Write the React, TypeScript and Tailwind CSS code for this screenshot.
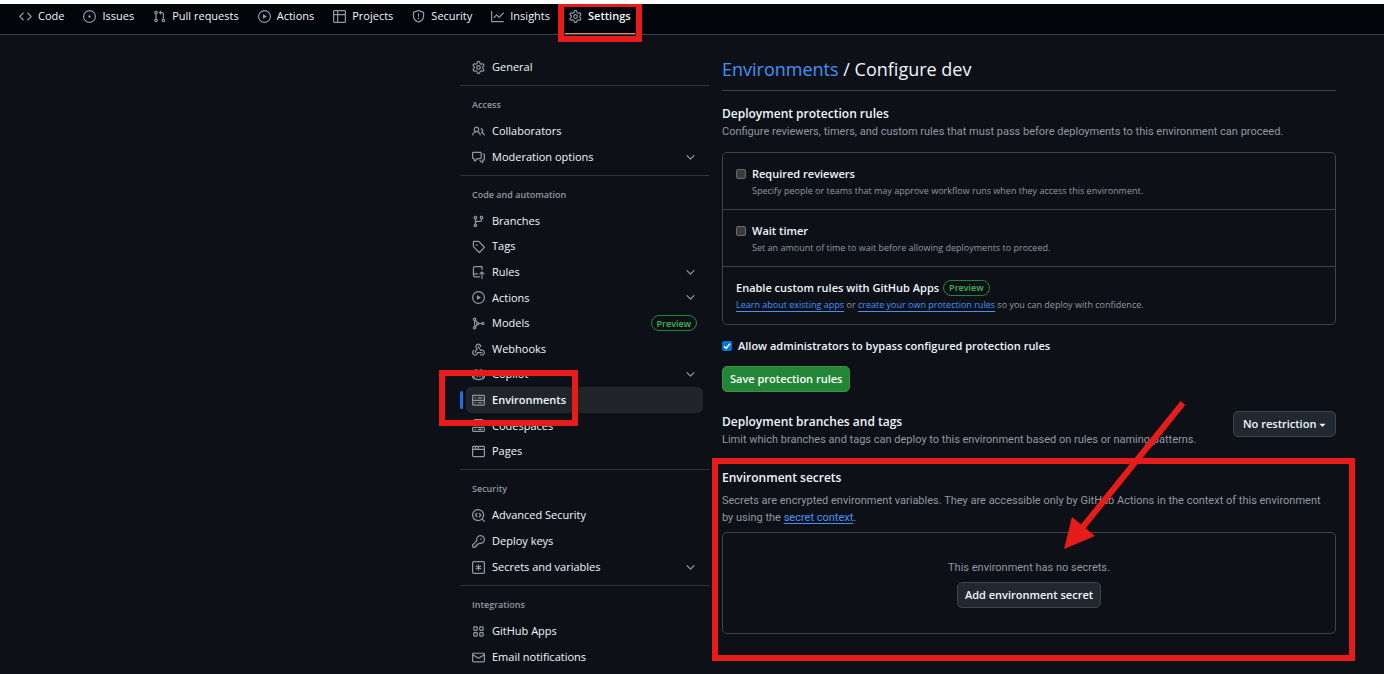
import { useState } from "react";
import type { ReactNode } from "react";

const icons: Record<string, ReactNode> = {
  code: (
    <path d="m11.28 3.22 4.25 4.25a.75.75 0 0 1 0 1.06l-4.25 4.25a.749.749 0 0 1-1.275-.326.749.749 0 0 1 .215-.734L13.94 8l-3.72-3.72a.749.749 0 0 1 .326-1.275.749.749 0 0 1 .734.215Zm-6.56 0a.751.751 0 0 1 1.042.018.751.751 0 0 1 .018 1.042L2.06 8l3.72 3.72a.749.749 0 0 1-.326 1.275.749.749 0 0 1-.734-.215L.47 8.53a.75.75 0 0 1 0-1.06Z" />
  ),
  issue: (
    <path d="M8 9.5a1.5 1.5 0 1 0 0-3 1.5 1.5 0 0 0 0 3ZM8 0a8 8 0 1 1 0 16A8 8 0 0 1 8 0ZM1.5 8a6.5 6.5 0 1 0 13 0 6.5 6.5 0 0 0-13 0Z" />
  ),
  pull: (
    <path d="M1.5 3.25a2.25 2.25 0 1 1 3 2.122v5.256a2.251 2.251 0 1 1-1.5 0V5.372A2.25 2.25 0 0 1 1.5 3.25Zm5.677-.177L9.573.677A.25.25 0 0 1 10 .854V2.5h1A2.5 2.5 0 0 1 13.5 5v5.628a2.251 2.251 0 1 1-1.5 0V5a1 1 0 0 0-1-1h-1v1.646a.25.25 0 0 1-.427.177L7.177 3.427a.25.25 0 0 1 0-.354ZM3.75 2.5a.75.75 0 1 0 0 1.5.75.75 0 0 0 0-1.5Zm0 9.5a.75.75 0 1 0 0 1.5.75.75 0 0 0 0-1.5Zm8.25.75a.75.75 0 1 0 1.5 0 .75.75 0 0 0-1.5 0Z" />
  ),
  play: (
    <path d="M8 0a8 8 0 1 1 0 16A8 8 0 0 1 8 0ZM1.5 8a6.5 6.5 0 1 0 13 0 6.5 6.5 0 0 0-13 0Zm4.879-2.773 4.264 2.559a.25.25 0 0 1 0 .428l-4.264 2.559A.25.25 0 0 1 6 10.559V5.442a.25.25 0 0 1 .379-.215Z" />
  ),
  table: (
    <path d="M0 1.75C0 .784.784 0 1.75 0h12.5C15.216 0 16 .784 16 1.75v12.5A1.75 1.75 0 0 1 14.25 16H1.75A1.75 1.75 0 0 1 0 14.25ZM6.5 6.5v8h7.75a.25.25 0 0 0 .25-.25V6.5Zm8-1.5V1.75a.25.25 0 0 0-.25-.25H6.5V5Zm-13 1.5v7.75c0 .138.112.25.25.25H5v-8ZM5 5V1.5H1.75a.25.25 0 0 0-.25.25V5Z" />
  ),
  shield: (
    <path d="M7.467.133a1.748 1.748 0 0 1 1.066 0l5.25 1.68A1.75 1.75 0 0 1 15 3.48V7c0 1.566-.32 3.182-1.303 4.682-.983 1.498-2.585 2.813-5.032 3.855a1.697 1.697 0 0 1-1.33 0c-2.447-1.042-4.049-2.357-5.032-3.855C1.32 10.182 1 8.566 1 7V3.48a1.75 1.75 0 0 1 1.217-1.667Zm.61 1.429a.25.25 0 0 0-.153 0l-5.25 1.68a.25.25 0 0 0-.174.238V7c0 1.358.275 2.666 1.057 3.86.784 1.194 2.121 2.34 4.366 3.297a.196.196 0 0 0 .154 0c2.245-.956 3.582-2.104 4.366-3.298C13.225 9.666 13.5 8.36 13.5 7V3.48a.251.251 0 0 0-.174-.237l-5.25-1.68ZM8.75 4.75v3a.75.75 0 0 1-1.5 0v-3a.75.75 0 0 1 1.5 0ZM9 10.5a1 1 0 1 1-2 0 1 1 0 0 1 2 0Z" />
  ),
  graph: (
    <path d="M1.5 1.75V13.5h13.75a.75.75 0 0 1 0 1.5H.75a.75.75 0 0 1-.75-.75V1.75a.75.75 0 0 1 1.5 0Zm14.28 2.53-5.25 5.25a.75.75 0 0 1-1.06 0L7 7.06 4.28 9.78a.751.751 0 0 1-1.042-.018.751.751 0 0 1-.018-1.042l3.25-3.25a.75.75 0 0 1 1.06 0L10 7.94l4.72-4.72a.751.751 0 0 1 1.042.018.751.751 0 0 1 .018 1.042Z" />
  ),
  gear: (
    <path d="M8 0a8.2 8.2 0 0 1 .701.031C9.444.095 9.99.645 10.16 1.29l.288 1.107c.018.066.079.158.212.224.231.114.454.243.668.386.123.082.233.09.299.071l1.103-.303c.644-.176 1.392.021 1.82.63.27.385.506.792.704 1.218.315.675.111 1.422-.364 1.891l-.814.806c-.049.048-.098.147-.088.294.016.257.016.515 0 .772-.01.147.038.246.088.294l.814.806c.475.469.679 1.216.364 1.891a7.977 7.977 0 0 1-.704 1.217c-.428.61-1.176.807-1.82.63l-1.102-.302c-.067-.019-.177-.011-.3.071a5.909 5.909 0 0 1-.668.386c-.133.066-.194.158-.211.224l-.29 1.106c-.168.646-.715 1.196-1.458 1.26a8.006 8.006 0 0 1-1.402 0c-.743-.064-1.289-.614-1.458-1.26l-.289-1.106c-.018-.066-.079-.158-.212-.224a5.738 5.738 0 0 1-.668-.386c-.123-.082-.233-.09-.299-.071l-1.103.303c-.644.176-1.392-.021-1.82-.63a8.12 8.12 0 0 1-.704-1.218c-.315-.675-.111-1.422.363-1.891l.815-.806c.05-.048.098-.147.088-.294a6.214 6.214 0 0 1 0-.772c.01-.147-.038-.246-.088-.294l-.815-.806C.635 6.045.431 5.298.746 4.623a7.92 7.92 0 0 1 .704-1.217c.428-.61 1.176-.807 1.82-.63l1.102.302c.067.019.177.011.3-.071.214-.143.437-.272.668-.386.133-.066.194-.158.211-.224l.29-1.106C6.009.645 6.556.095 7.299.03 7.53.01 7.764 0 8 0Zm-.571 1.525c-.036.003-.108.036-.137.146l-.289 1.105c-.147.561-.549.967-.998 1.189-.173.086-.34.183-.5.29-.417.278-.97.423-1.529.27l-1.103-.303c-.109-.03-.175.016-.195.045-.22.312-.412.644-.573.99-.014.031-.021.11.059.19l.815.806c.411.406.562.957.53 1.456a4.709 4.709 0 0 0 0 .582c.032.499-.119 1.05-.53 1.456l-.815.806c-.081.08-.073.159-.059.19.162.346.353.677.573.989.02.03.085.076.195.046l1.102-.303c.56-.153 1.113-.008 1.53.27.161.107.328.204.501.29.447.222.85.629.997 1.189l.289 1.105c.029.109.101.143.137.146a6.6 6.6 0 0 0 1.142 0c.036-.003.108-.036.137-.146l.289-1.105c.147-.561.549-.967.998-1.189.173-.086.34-.183.5-.29.417-.278.97-.423 1.529-.27l1.103.303c.109.029.175-.016.195-.045.22-.313.411-.644.573-.99.014-.031.021-.11-.059-.19l-.815-.806c-.411-.406-.562-.957-.53-1.456a4.709 4.709 0 0 0 0-.582c-.032-.499.119-1.05.53-1.456l.815-.806c.081-.08.073-.159.059-.19a6.464 6.464 0 0 0-.573-.989c-.02-.03-.085-.076-.195-.046l-1.102.303c-.56.153-1.113.008-1.53-.27a4.44 4.44 0 0 0-.501-.29c-.447-.222-.85-.629-.997-1.189l-.289-1.105c-.029-.11-.101-.143-.137-.146a6.6 6.6 0 0 0-1.142 0ZM11 8a3 3 0 1 1-6 0 3 3 0 0 1 6 0ZM9.5 8a1.5 1.5 0 1 0-3.001.001A1.5 1.5 0 0 0 9.5 8Z" />
  ),
  people: (
    <path d="M2 5.5a3.5 3.5 0 1 1 5.898 2.549 5.508 5.508 0 0 1 3.034 4.084.75.75 0 1 1-1.482.235 4 4 0 0 0-7.9 0 .75.75 0 0 1-1.482-.236A5.507 5.507 0 0 1 3.102 8.05 3.493 3.493 0 0 1 2 5.5ZM11 4a3.001 3.001 0 0 1 2.22 5.018 5.01 5.01 0 0 1 2.56 3.012.749.749 0 0 1-.885.954.752.752 0 0 1-.549-.514 3.507 3.507 0 0 0-2.522-2.372.75.75 0 0 1-.574-.73v-.352a.75.75 0 0 1 .416-.672A1.5 1.5 0 0 0 11 5.5.75.75 0 0 1 11 4Zm-5.5-.5a2 2 0 1 0-.001 3.999A2 2 0 0 0 5.5 3.5Z" />
  ),
  discussion: (
    <path d="M1.75 1h8.5c.966 0 1.75.784 1.75 1.75v5.5A1.75 1.75 0 0 1 10.25 10H7.061l-2.574 2.573A1.458 1.458 0 0 1 2 11.543V10h-.25A1.75 1.75 0 0 1 0 8.25v-5.5C0 1.784.784 1 1.75 1ZM1.5 2.75v5.5c0 .138.112.25.25.25h1a.75.75 0 0 1 .75.75v2.19l2.72-2.72a.749.749 0 0 1 .53-.22h3.5a.25.25 0 0 0 .25-.25v-5.5a.25.25 0 0 0-.25-.25h-8.5a.25.25 0 0 0-.25.25Zm13 2a.25.25 0 0 0-.25-.25h-.5a.75.75 0 0 1 0-1.5h.5c.966 0 1.75.784 1.75 1.75v5.5A1.75 1.75 0 0 1 14.25 12H14v1.543a1.458 1.458 0 0 1-2.487 1.03L9.22 12.28a.749.749 0 0 1 .326-1.275.749.749 0 0 1 .734.215l2.22 2.22v-2.19a.75.75 0 0 1 .75-.75h1a.25.25 0 0 0 .25-.25Z" />
  ),
  branch: (
    <path d="M9.5 3.25a2.25 2.25 0 1 1 3 2.122V6A2.5 2.5 0 0 1 10 8.5H6a1 1 0 0 0-1 1v1.128a2.251 2.251 0 1 1-1.5 0V5.372a2.25 2.25 0 1 1 1.5 0v1.836A2.493 2.493 0 0 1 6 7h4a1 1 0 0 0 1-1v-.628A2.25 2.25 0 0 1 9.5 3.25Zm-6 0a.75.75 0 1 0 1.5 0 .75.75 0 0 0-1.5 0Zm8.25-.75a.75.75 0 1 0 0 1.5.75.75 0 0 0 0-1.5ZM4.25 12a.75.75 0 1 0 0 1.5.75.75 0 0 0 0-1.5Z" />
  ),
  tag: (
    <path d="M1 7.775V2.75C1 1.784 1.784 1 2.75 1h5.025c.464 0 .91.184 1.238.513l6.25 6.25a1.75 1.75 0 0 1 0 2.474l-5.026 5.026a1.75 1.75 0 0 1-2.474 0l-6.25-6.25A1.752 1.752 0 0 1 1 7.775Zm1.5 0c0 .066.026.13.073.177l6.25 6.25a.25.25 0 0 0 .354 0l5.025-5.025a.25.25 0 0 0 0-.354l-6.25-6.25a.25.25 0 0 0-.177-.073H2.75a.25.25 0 0 0-.25.25ZM6 5a1 1 0 1 1 0 2 1 1 0 0 1 0-2Z" />
  ),
  push: (
    <path d="M1 2.5A2.5 2.5 0 0 1 3.5 0h8.75a.75.75 0 0 1 .75.75v3.5a.75.75 0 0 1-1.5 0V1.5h-8a1 1 0 0 0-1 1v6.708A2.493 2.493 0 0 1 3.5 9h3.25a.75.75 0 0 1 0 1.5H3.5a1 1 0 0 0 0 2h5.75a.75.75 0 0 1 0 1.5H3.5A2.5 2.5 0 0 1 1 11.5Zm13.23 7.79h-.001l-1.224-1.224v6.184a.75.75 0 0 1-1.5 0V9.066L10.28 10.29a.75.75 0 0 1-1.06-1.061l2.505-2.504a.75.75 0 0 1 1.06 0L15.29 9.23a.751.751 0 0 1-.018 1.042.751.751 0 0 1-1.042.018Z" />
  ),
  model: (
    <g fill="none" stroke="currentColor" strokeWidth="1.5">
      <circle cx="3.25" cy="2.75" r="1.5" />
      <circle cx="3.25" cy="13.25" r="1.5" />
      <circle cx="13.25" cy="8" r="1.5" />
      <circle cx="7.25" cy="8" r="1.25" />
      <path d="M8.5 8h3.25M3.25 4.25v7.5M4.3 3.9l2.2 3M4.3 12.1l2.2-3" />
    </g>
  ),
  webhook: (
    <path d="M5.5 4.25a2.25 2.25 0 0 1 4.5 0 .75.75 0 0 0 1.5 0 3.75 3.75 0 1 0-6.14 2.889l-2.272 4.258a.75.75 0 0 0 1.324.706L7 7.25a.75.75 0 0 0-.309-1.015A2.25 2.25 0 0 1 5.5 4.25ZM7.364 3.607a.75.75 0 0 1 1.03.257l2.608 4.349a3.75 3.75 0 1 1-.628 6.785.75.75 0 0 1 .752-1.299 2.25 2.25 0 1 0-.033-3.88.75.75 0 0 1-1.03-.256L7.107 4.636a.75.75 0 0 1 .257-1.03ZM2.9 8.776A.75.75 0 0 1 2.625 9.8 2.25 2.25 0 1 0 6 11.75a.75.75 0 0 1 .75-.751h5.5a.75.75 0 0 1 0 1.5H7.425a3.751 3.751 0 1 1-5.55-3.998.75.75 0 0 1 1.024.274Z" />
  ),
  copilot: (
    <g fill="none" stroke="currentColor" strokeWidth="1.5" strokeLinecap="round">
      <path d="M2.4 7.6C1.3 8 .8 9 .75 9.6v1.6c.4.9 3.4 3.1 7.25 3.1s6.85-2.2 7.25-3.1V9.6c-.05-.6-.55-1.6-1.65-2" />
      <path d="M7.3 4.6c0-1.8-.9-2.4-2.8-2.2-1.8.2-2.3 1-2.3 2.6 0 1.7.7 2.3 2.5 2.3s2.6-1 2.6-2.7ZM8.7 4.6c0-1.8.9-2.4 2.8-2.2 1.8.2 2.3 1 2.3 2.6 0 1.7-.7 2.3-2.5 2.3s-2.6-1-2.6-2.7Z" />
      <path d="M2.5 7.5v5M13.5 7.5v5M6.25 9.75V11M9.75 9.75V11" />
    </g>
  ),
  server: (
    <path d="M1.75 1h12.5c.966 0 1.75.784 1.75 1.75v4c0 .372-.116.717-.314 1 .198.283.314.628.314 1v4a1.75 1.75 0 0 1-1.75 1.75H1.75A1.75 1.75 0 0 1 0 12.75v-4c0-.358.109-.707.314-1a1.739 1.739 0 0 1-.314-1v-4C0 1.784.784 1 1.75 1ZM1.5 2.75v4c0 .138.112.25.25.25h12.5a.25.25 0 0 0 .25-.25v-4a.25.25 0 0 0-.25-.25H1.75a.25.25 0 0 0-.25.25Zm.25 5.75a.25.25 0 0 0-.25.25v4c0 .138.112.25.25.25h12.5a.25.25 0 0 0 .25-.25v-4a.25.25 0 0 0-.25-.25ZM7 4.75A.75.75 0 0 1 7.75 4h4.5a.75.75 0 0 1 0 1.5h-4.5A.75.75 0 0 1 7 4.75ZM7.75 10h4.5a.75.75 0 0 1 0 1.5h-4.5a.75.75 0 0 1 0-1.5ZM3 4.75A.75.75 0 0 1 3.75 4h.5a.75.75 0 0 1 0 1.5h-.5A.75.75 0 0 1 3 4.75ZM3.75 10h.5a.75.75 0 0 1 0 1.5h-.5a.75.75 0 0 1 0-1.5Z" />
  ),
  codespaces: (
    <path d="M0 11.25c0-.966.784-1.75 1.75-1.75h12.5c.966 0 1.75.784 1.75 1.75v3A1.75 1.75 0 0 1 14.25 16H1.75A1.75 1.75 0 0 1 0 14.25Zm2-9.5C2 .784 2.784 0 3.75 0h8.5C13.216 0 14 .784 14 1.75v5a1.75 1.75 0 0 1-1.75 1.75h-8.5A1.75 1.75 0 0 1 2 6.75Zm1.75-.25a.25.25 0 0 0-.25.25v5c0 .138.112.25.25.25h8.5a.25.25 0 0 0 .25-.25v-5a.25.25 0 0 0-.25-.25Zm-2 9.5a.25.25 0 0 0-.25.25v3c0 .138.112.25.25.25h12.5a.25.25 0 0 0 .25-.25v-3a.25.25 0 0 0-.25-.25ZM7 12.75a.75.75 0 0 1 .75-.75h4.5a.75.75 0 0 1 0 1.5h-4.5a.75.75 0 0 1-.75-.75Zm-4 0a.75.75 0 0 1 .75-.75h.5a.75.75 0 0 1 0 1.5h-.5a.75.75 0 0 1-.75-.75Z" />
  ),
  browser: (
    <path d="M0 2.75C0 1.784.784 1 1.75 1h12.5c.966 0 1.75.784 1.75 1.75v10.5A1.75 1.75 0 0 1 14.25 15H1.75A1.75 1.75 0 0 1 0 13.25ZM14.5 6h-13v7.25c0 .138.112.25.25.25h12.5a.25.25 0 0 0 .25-.25Zm-6-3.5v2h6V2.75a.25.25 0 0 0-.25-.25ZM5 2.5v2h2v-2Zm-3.25 0a.25.25 0 0 0-.25.25V4.500h2v-2Z" />
  ),
  codescan: (
    <path d="M8.47 4.97a.75.75 0 0 0 0 1.06L9.94 7.5 8.47 8.97a.75.75 0 1 0 1.06 1.06l2-2a.75.75 0 0 0 0-1.06l-2-2a.75.75 0 0 0-1.06 0ZM6.53 6.03a.75.75 0 0 0-1.06-1.06l-2 2a.75.75 0 0 0 0 1.06l2 2a.75.75 0 1 0 1.06-1.06L5.06 7.5l1.47-1.47ZM12.246 13.307a7.501 7.501 0 1 1 1.06-1.06l2.474 2.473a.749.749 0 0 1-.326 1.275.749.749 0 0 1-.734-.215ZM1.5 7.5a6.002 6.002 0 0 0 3.608 5.504 6.002 6.002 0 0 0 6.486-1.117.748.748 0 0 1 .292-.293A6 6 0 1 0 1.5 7.5Z" />
  ),
  key: (
    <path d="M10.5 0a5.499 5.499 0 1 1-1.288 10.848l-.932.932a.749.749 0 0 1-.53.22H7v.75a.749.749 0 0 1-.22.53l-.5.5a.749.749 0 0 1-.53.22H5v.75a.749.749 0 0 1-.22.53l-.5.5a.749.749 0 0 1-.53.22h-2A1.75 1.75 0 0 1 0 14.25v-2c0-.199.079-.389.22-.53l4.932-4.932A5.5 5.5 0 0 1 10.5 0Zm-4 5.5c-.001.431.069.86.205 1.269a.75.75 0 0 1-.181.768L1.5 12.56v1.69c0 .138.112.25.25.25h1.69l.06-.06v-1.19a.75.75 0 0 1 .75-.75h1.19l.06-.06v-1.19a.75.75 0 0 1 .75-.75h1.19l1.023-1.025a.75.75 0 0 1 .768-.18A4 4 0 1 0 6.5 5.5ZM11 6a1 1 0 1 1 0-2 1 1 0 0 1 0 2Z" />
  ),
  asterisk: (
    <g fill="none" stroke="currentColor" strokeWidth="1.5" strokeLinecap="round">
      <rect x=".75" y=".75" width="14.5" height="14.5" rx="1.5" />
      <path d="M8 4.75v6.5M5.2 6.4l5.6 3.2M10.8 6.4 5.2 9.6" />
    </g>
  ),
  apps: (
    <g fill="none" stroke="currentColor" strokeWidth="1.5">
      <rect x="2.25" y="2.25" width="4.25" height="4.25" rx="1" />
      <rect x="9.5" y="2.25" width="4.25" height="4.25" rx="1" />
      <rect x="2.25" y="9.5" width="4.25" height="4.25" rx="1" />
      <rect x="9.5" y="9.5" width="4.25" height="4.25" rx="1" />
    </g>
  ),
  mail: (
    <path d="M1.75 2h12.5c.966 0 1.75.784 1.75 1.75v8.5A1.75 1.75 0 0 1 14.25 14H1.75A1.75 1.75 0 0 1 0 12.25v-8.5C0 2.784.784 2 1.75 2ZM1.5 12.251c0 .138.112.25.25.25h12.5a.25.25 0 0 0 .25-.25V5.809L8.38 9.397a.75.75 0 0 1-.76 0L1.5 5.809v6.442Zm13-8.181v-.32a.25.25 0 0 0-.25-.25H1.75a.25.25 0 0 0-.25.25v.32L8 7.88Z" />
  ),
  chevron: (
    <path d="M12.78 5.22a.749.749 0 0 1 0 1.06l-4.25 4.25a.749.749 0 0 1-1.06 0L3.22 6.28a.749.749 0 1 1 1.06-1.06L8 8.939l3.72-3.719a.749.749 0 0 1 1.06 0Z" />
  ),
  triangle: (
    <path d="m4.427 7.427 3.396 3.396a.25.25 0 0 0 .354 0l3.396-3.396A.25.25 0 0 0 11.396 7H4.604a.25.25 0 0 0-.177.427Z" />
  ),
};

function Icon({ name, tone = "text-[#9198a1]" }: { name: string; tone?: string }) {
  return (
    <svg
      viewBox="0 0 16 16"
      className={`size-[13px] shrink-0 ${tone}`}
      fill="currentColor"
      fillRule="evenodd"
      aria-hidden="true"
    >
      {icons[name]}
    </svg>
  );
}

const tabs = [
  ["code", "Code"],
  ["issue", "Issues"],
  ["pull", "Pull requests"],
  ["play", "Actions"],
  ["table", "Projects"],
  ["shield", "Security"],
  ["graph", "Insights"],
  ["gear", "Settings"],
];

type Item = { icon: string; label: string; menu?: boolean; preview?: boolean };

const accessItems: Item[] = [
  { icon: "people", label: "Collaborators" },
  { icon: "discussion", label: "Moderation options", menu: true },
];
const codeItems: Item[] = [
  { icon: "branch", label: "Branches" },
  { icon: "tag", label: "Tags" },
  { icon: "push", label: "Rules", menu: true },
  { icon: "play", label: "Actions", menu: true },
  { icon: "model", label: "Models", preview: true },
  { icon: "webhook", label: "Webhooks" },
  { icon: "copilot", label: "Copilot", menu: true },
  { icon: "server", label: "Environments" },
  { icon: "codespaces", label: "Codespaces" },
  { icon: "browser", label: "Pages" },
];
const securityItems: Item[] = [
  { icon: "codescan", label: "Advanced Security" },
  { icon: "key", label: "Deploy keys" },
  { icon: "asterisk", label: "Secrets and variables", menu: true },
];
const integrationItems: Item[] = [
  { icon: "apps", label: "GitHub Apps" },
  { icon: "mail", label: "Email notifications" },
];

const muted = "font-['Roboto',sans-serif] text-[11px] leading-[17px] text-[#9198a1]";

function PreviewBadge() {
  return (
    <span className="inline-flex h-4 items-center rounded-full border border-[#238636] px-[5px] text-[9px] font-semibold text-[#3fb950]">
      Preview
    </span>
  );
}

function NavItem({ item }: { item: Item }) {
  const active = item.label === "Environments";
  const row = "flex h-[26px] w-full items-center gap-[7px] rounded-[5px] px-[6px] text-left";
  const body = (
    <>
      <Icon name={item.icon} />
      <span className="flex-1">{item.label}</span>
      {item.menu && <Icon name="chevron" />}
      {item.preview && <PreviewBadge />}
    </>
  );
  return (
    <li className="relative px-[6px]">
      {item.menu ? (
        <button type="button" className={row}>
          {body}
        </button>
      ) : (
        <a href="#" aria-current={active ? "page" : undefined} className={active ? `${row} bg-[#212529] font-semibold` : row}>
          {body}
        </a>
      )}
      {active && (
        <>
          <span className="absolute top-1 left-0 h-[18px] w-[3px] rounded-sm bg-[#1f6feb]" />
          <span className="absolute -top-[17px] -left-[21px] z-10 h-14 w-[139px] border-[6px] border-[#e81b1b]" />
        </>
      )}
    </li>
  );
}

function NavSection({ title, items, list = "" }: { title: string; items: Item[]; list?: string }) {
  return (
    <section className="border-t border-[#2f353d] pt-[6px] pb-[5px]">
      <h2 className="flex h-[26px] items-center px-3 text-[9px] font-semibold text-[#9198a1]">{title}</h2>
      <ul className={list}>
        {items.map((item) => (
          <NavItem key={item.label} item={item} />
        ))}
      </ul>
    </section>
  );
}

function Checkbox({ id, initial = false }: { id: string; initial?: boolean }) {
  const [checked, setChecked] = useState(initial);
  return (
    <span className="relative flex size-[10px] shrink-0">
      <input
        id={id}
        type="checkbox"
        checked={checked}
        onChange={(e) => setChecked(e.target.checked)}
        className="size-[10px] appearance-none rounded-[2px] border border-[#6b6b6b] bg-[#3b3b3b] checked:border-[#0075d6] checked:bg-[#0075d6]"
      />
      {checked && (
        <svg viewBox="0 0 10 10" className="pointer-events-none absolute inset-0" aria-hidden="true">
          <path d="M2 5.2 4.1 7.3 8 2.7" fill="none" stroke="#fff" strokeWidth="1.5" />
        </svg>
      )}
    </span>
  );
}

function RuleRow({ id, title, text }: { id: string; title: string; text: string }) {
  return (
    <div className="flex h-[57px] flex-col justify-center border-b border-[#3d444d] px-[13px] pt-[2px]">
      <div className="flex items-center gap-[6px]">
        <Checkbox id={id} />
        <label htmlFor={id} className="leading-[17px] font-semibold">
          {title}
        </label>
      </div>
      <p className="pl-4 text-[9px] leading-[17px] text-[#9198a1]">{text}</p>
    </div>
  );
}

export default function App() {
  return (
    <div className="min-h-screen overflow-hidden border-t-4 border-white bg-[#0d1117] font-['Open_Sans',sans-serif] text-[11px] text-[#f0f6fc]">
      <header className="border-b border-[#3d444d] bg-[#010409]">
        <nav aria-label="Repository" className="flex h-[30px] gap-[19px] px-[19px]">
          {tabs.map(([icon, label]) => {
            const active = label === "Settings";
            return (
              <a
                key={label}
                href="#"
                aria-current={active ? "page" : undefined}
                className={active ? "relative flex items-center gap-[6px] pb-[5px] font-semibold" : "flex items-center gap-[6px] pb-[5px]"}
              >
                <Icon name={icon} />
                {label}
                {active && (
                  <>
                    <span className="absolute -inset-x-1 bottom-0 h-px bg-[#f78166]" />
                    <span className="absolute -inset-x-[11px] -top-[3px] -bottom-2 z-10 border-[6px] border-[#e81b1b]" />
                  </>
                )}
              </a>
            );
          })}
        </nav>
      </header>

      <div className="flex gap-[13px] pt-[19px] pr-12 pl-[460px]">
        <aside className="w-[249px] shrink-0">
          <nav aria-label="Settings">
            <ul className="pb-[5px]">
              <NavItem item={{ icon: "gear", label: "General" }} />
            </ul>
            <NavSection title="Access" items={accessItems} />
            <NavSection title="Code and automation" items={codeItems} list="grid h-64 auto-rows-fr" />
            <NavSection title="Security" items={securityItems} />
            <NavSection title="Integrations" items={integrationItems} />
          </nav>
        </aside>

        <main className="min-w-0 flex-1">
          <h1 className="border-b border-[#3d444d] pt-px pb-[7px] text-[18px] leading-7">
            <a href="#" className="text-[#4493f8]">
              Environments
            </a>{" "}
            / Configure dev
          </h1>

          <section className="pt-[14px]">
            <h2 className="text-[12px] leading-[18px] font-semibold">Deployment protection rules</h2>
            <p className={muted}>
              Configure reviewers, timers, and custom rules that must pass before deployments to this environment can proceed.
            </p>
            <div className="mt-3 rounded-[5px] border border-[#3d444d]">
              <RuleRow id="reviewers" title="Required reviewers" text="Specify people or teams that may approve workflow runs when they access this environment." />
              <RuleRow id="timer" title="Wait timer" text="Set an amount of time to wait before allowing deployments to proceed." />
              <div className="flex h-[57px] flex-col justify-center px-[13px]">
                <div className="flex items-end gap-1">
                  <h3 className="leading-[17px] font-semibold">Enable custom rules with GitHub Apps</h3>
                  <PreviewBadge />
                </div>
                <p className="text-[9px] leading-[17px] text-[#9198a1]">
                  <a href="#" className="border-b border-[#4493f8] text-[#4493f8]">
                    Learn about existing apps
                  </a>{" "}
                  or{" "}
                  <a href="#" className="border-b border-[#4493f8] text-[#4493f8]">
                    create your own protection rules
                  </a>{" "}
                  so you can deploy with confidence.
                </p>
              </div>
            </div>
            <div className="mt-[13px] flex items-center gap-[6px]">
              <Checkbox id="bypass" initial />
              <label htmlFor="bypass" className="leading-4 font-semibold">
                Allow administrators to bypass configured protection rules
              </label>
            </div>
            <button
              type="button"
              className="mt-3 flex h-[26px] items-center rounded-[5px] border border-[#3a9149] bg-[#238636] px-[7px] font-semibold text-white"
            >
              Save protection rules
            </button>
          </section>

          <section className="flex items-start justify-between pt-[19px]">
            <div className="pt-[2px]">
              <h2 className="text-[12px] leading-[18px] font-semibold">Deployment branches and tags</h2>
              <p className={muted}>
                Limit which branches and tags can deploy to this environment based on rules or naming patterns.
              </p>
            </div>
            <div className="relative flex">
              <select
                aria-label="Deployment branches and tags"
                className="h-[26px] w-[103px] appearance-none rounded-[5px] border border-[#3d444d] bg-[#212830] pl-[9px] font-semibold"
              >
                <option>No restriction</option>
                <option>Protected branches only</option>
                <option>Selected branches and tags</option>
              </select>
              <span className="pointer-events-none absolute inset-y-0 right-[7px] flex items-center">
                <Icon name="triangle" tone="text-[#f0f6fc]" />
              </span>
            </div>
          </section>

          <section className="relative pt-[21px]">
            <h2 className="text-[12px] leading-[18px] font-semibold">Environment secrets</h2>
            <p className={`${muted} pt-[5px] pr-2`}>
              Secrets are encrypted environment variables. They are accessible only by GitHub Actions in the context of this environment by using the{" "}
              <a href="#" className="text-[#4493f8] underline underline-offset-2">
                secret context
              </a>
              .
            </p>
            <div className="mt-[6px] flex flex-col items-center gap-[6px] rounded-[5px] border border-[#3d444d] pt-[26px] pb-[25px]">
              <p className={muted}>This environment has no secrets.</p>
              <button type="button" className="flex h-[26px] items-center rounded-[5px] border border-[#3d444d] bg-[#212830] px-[7px] font-semibold">
                Add environment secret
              </button>
            </div>
            <span className="pointer-events-none absolute top-[10px] -right-[19px] -bottom-[27px] -left-[10px] border-[6px] border-[#e81b1b]" />
            <svg viewBox="0 0 124 148" className="pointer-events-none absolute -top-[47px] right-[150px] h-[148px] w-[124px]" aria-hidden="true">
              <path d="M121 2 20 127" stroke="#e81b1b" strokeWidth="6" />
              <path d="M2 148 10 116 33 135Z" fill="#e81b1b" />
            </svg>
          </section>
        </main>
      </div>
    </div>
  );
}
